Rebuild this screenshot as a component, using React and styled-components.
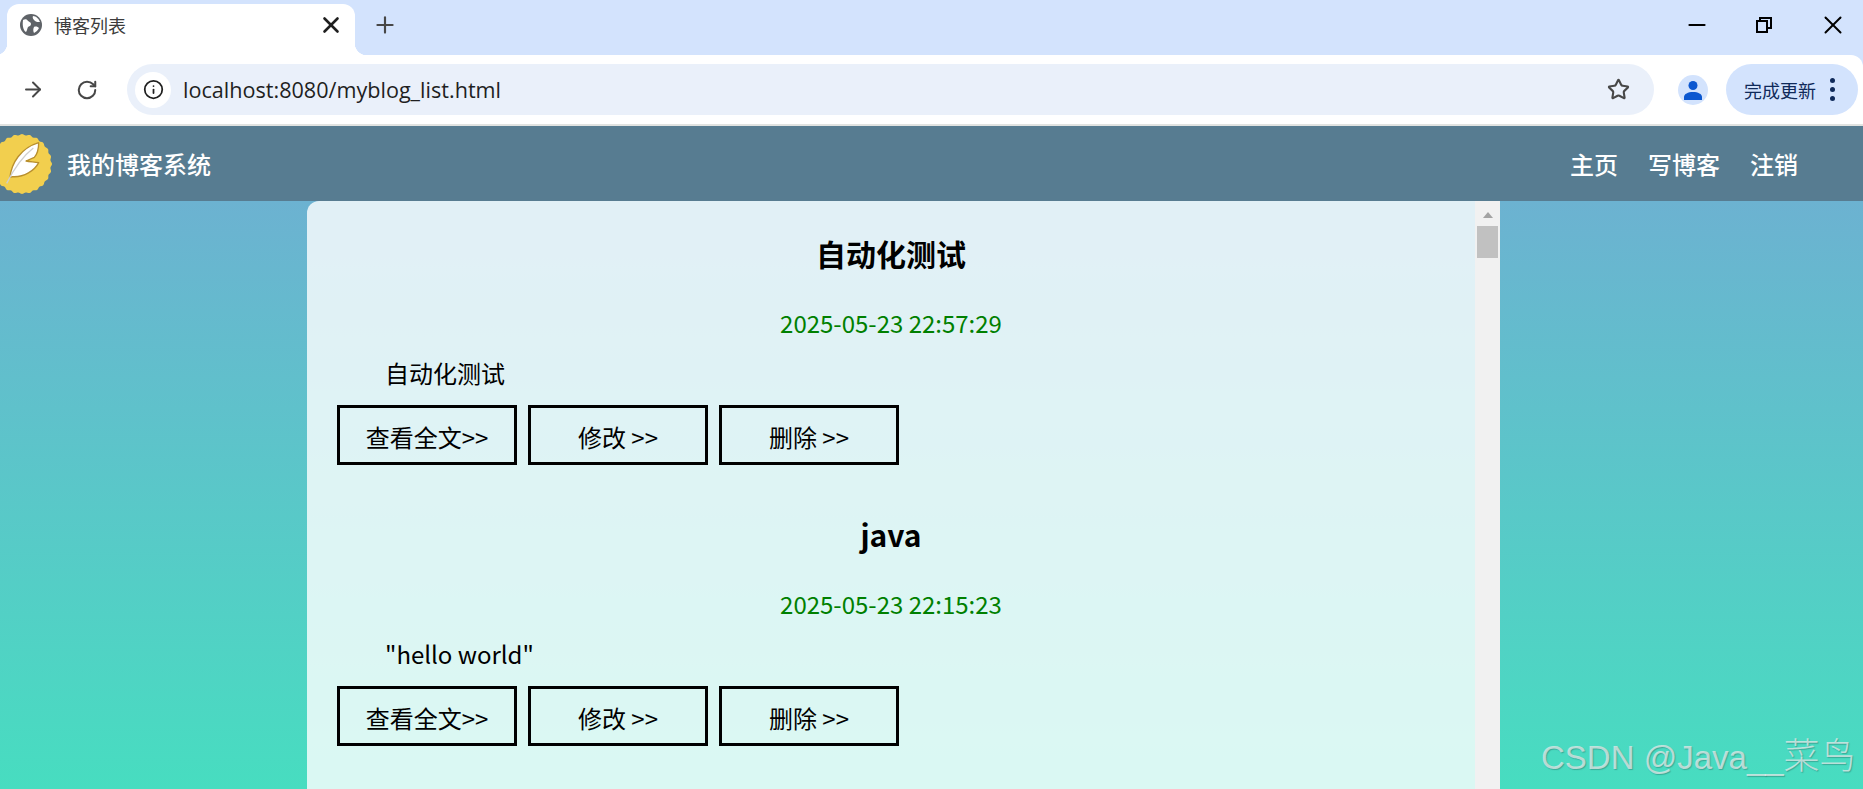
import React from 'react';
import styled, {createGlobalStyle} from "styled-components";
import {ArrowRight, Info, Minus, Plus, RotateCw, Star, X} from "lucide-react";

const cjk = `"Noto Sans CJK SC", "Noto Sans", sans-serif`

const GlobalStyle = createGlobalStyle`
  html, body {
    margin: 0;
    padding: 0;
    height: 100%;
    overflow: hidden;
    font-family: ${cjk};
  }
`

const Shell = styled.div`
  width: 100%;
  height: 789px;
  display: flex;
  flex-direction: column;
  overflow: hidden;
  position: relative;
`

const TabStrip = styled.div`
  flex: 0 0 55px;
  box-sizing: border-box;
  padding: 4px 0 0 7px;
  background: #d3e3fd;
  display: flex;
  align-items: stretch;
`
const Tab = styled.div`
  width: 348px;
  box-sizing: border-box;
  padding: 0 11px 9px 13px;
  background: #fff;
  border-radius: 12px 12px 0 0;
  display: flex;
  align-items: center;
  gap: 12px;
  position: relative;
  font-size: 18px;
  color: #3c3c3c;

  &::before, &::after {
    content: "";
    position: absolute;
    bottom: 0;
    width: 12px;
    height: 12px;
  }
  &::before {
    left: -12px;
    background: radial-gradient(circle at 0 0, transparent 12px, #fff 12.5px);
  }
  &::after {
    right: -12px;
    background: radial-gradient(circle at 100% 0, transparent 12px, #fff 12.5px);
  }
`
const TabTitle = styled.span`
  flex: 1;
`
const NewTab = styled.div`
  margin-left: 17px;
  padding-bottom: 9px;
  display: flex;
  align-items: center;
  color: #474747;
`
const WindowControls = styled.div`
  margin-left: auto;
  display: flex;
  align-items: center;
  align-self: flex-start;
  height: 42px;
  padding-right: 15px;
  gap: 46px;
  color: #000;
`

const ToolbarWrap = styled.div`
  flex: 0 0 69px;
  background: #d3e3fd;
`
const Toolbar = styled.div`
  height: 69px;
  box-sizing: border-box;
  padding: 9px 5px 9px 21px;
  background: #fff;
  border-top-right-radius: 12px;
  display: flex;
  align-items: center;
  color: #474747;
`
const ToolIcon = styled.div`
  width: 24px;
  display: flex;
  justify-content: center;
  margin-right: 30px;
`
const AddressBar = styled.div`
  flex: 0 0 1527px;
  height: 51px;
  margin-left: -2px;
  box-sizing: border-box;
  padding: 0 24px 0 8px;
  background: #eaf0fa;
  border-radius: 26px;
  display: flex;
  align-items: center;
`
const InfoBadge = styled.div`
  width: 36px;
  height: 36px;
  border-radius: 50%;
  background: #fff;
  color: #1f1f1f;
  display: flex;
  align-items: center;
  justify-content: center;
  margin-right: 12px;
`
const Url = styled.span`
  flex: 1;
  font-family: "Open Sans", sans-serif;
  font-size: 21.6px;
  color: #1f1f1f;
`
const Avatar = styled.div`
  width: 30px;
  height: 30px;
  margin-left: 24px;
  border-radius: 50%;
  background: #d3e3fd;
  display: flex;
  align-items: center;
  justify-content: center;
`
const UpdateButton = styled.div`
  width: 132px;
  height: 51px;
  margin-left: 18px;
  box-sizing: border-box;
  padding-left: 18px;
  border-radius: 26px;
  background: #d3e3fd;
  color: #0f2a5a;
  font-size: 18px;
  display: flex;
  align-items: center;
  gap: 14px;
`
const Dots = styled.div`
  display: flex;
  flex-direction: column;
  gap: 4px;

  i {
    display: block;
    width: 5px;
    height: 5px;
    border-radius: 50%;
    background: #0f2a5a;
  }
`
const ChromeLine = styled.div`
  flex: 0 0 2px;
  background: #e1e3e1;
`

const NavBar = styled.nav`
  flex: 0 0 75px;
  box-sizing: border-box;
  padding-right: 65px;
  background: #577c91;
  display: flex;
  align-items: center;
  color: #fff;
  font-size: 24px;
  font-weight: 500;
`
const Logo = styled.svg`
  width: 60px;
  height: 60px;
  margin-left: -7px;
  margin-right: 14px;
  flex: none;
`
const NavLinks = styled.div`
  margin-left: auto;
  display: flex;
  gap: 30px;
`

const Main = styled.main`
  flex: 1;
  min-height: 0;
  padding-left: 307px;
  background: linear-gradient(to bottom, #6cb2d1, #47ddc0);
  display: flex;
`
const Card = styled.section`
  width: 1193px;
  background: rgba(255, 255, 255, 0.8);
  border-radius: 12px 0 0 0;
  display: flex;
  overflow: hidden;
`
const Content = styled.div`
  flex: 1;
  box-sizing: border-box;
  padding: 28px 0 0 30px;
`
const Track = styled.div`
  flex: 0 0 25px;
  box-sizing: border-box;
  padding: 11px 2px 0;
  background: #f1f1f1;
  display: flex;
  flex-direction: column;
  align-items: center;

  &::before {
    content: "";
    border: 5.5px solid transparent;
    border-top: 0;
    border-bottom: 6px solid #a3a3a3;
  }
`
const Thumb = styled.div`
  width: 21px;
  height: 32px;
  margin-top: 8px;
  background: #c1c1c1;
`

const Blog = styled.article`
  margin-bottom: 45px;
  color: #000;
`
const BlogTitle = styled.h2`
  margin: 0 0 0 -30px;
  font-size: 30px;
  line-height: 48px;
  font-weight: 700;
  text-align: center;
`
const BlogDate = styled.div`
  margin: 28px 0 0 -30px;
  font-size: 24px;
  line-height: 36px;
  color: #008000;
  text-align: center;
`
const BlogDesc = styled.p`
  margin: 14px 0 0;
  font-size: 24px;
  line-height: 36px;
  text-indent: 48px;
`
const Actions = styled.div`
  margin-top: 14px;
  display: flex;
  gap: 11px;
`
const ActionLink = styled.a`
  width: 180px;
  height: 60px;
  box-sizing: border-box;
  border: 3px solid #000;
  padding-top: 3px;
  font-size: 24px;
  display: flex;
  align-items: center;
  justify-content: center;
  color: #000;
  text-decoration: none;
`

const Watermark = styled.div`
  position: absolute;
  left: 1541px;
  top: 733px;
  font-family: "Liberation Sans", "Noto Sans CJK SC", sans-serif;
  font-size: 33px;
  line-height: 48px;
  white-space: nowrap;
  color: rgba(235, 235, 235, 0.72);
  text-shadow: 1px 1px 1px rgba(40, 110, 100, 0.45);

  span {
    font-size: 36px;
    font-weight: 300;
  }
`

// scalloped edge of the logo badge
const badgePath = () => {
    const cx = 66, cy = 132, points = []
    for (let i = 0; i < 240; i++) {
        const a = (i / 240) * Math.PI * 2
        const r = 88 + 2 * Math.cos(a * 24)
        points.push(`${(cx + r * Math.cos(a)).toFixed(1)} ${(cy + r * Math.sin(a)).toFixed(1)}`)
    }
    return `M${points.join("L")}Z`
}

const blogs = [
    {title: "自动化测试", date: "2025-05-23 22:57:29", desc: "自动化测试"},
    {title: "java", date: "2025-05-23 22:15:23", desc: "\"hello world\""},
]

const App = () => {
    return (
        <Shell>
            <GlobalStyle/>
            <TabStrip>
                <Tab>
                    <svg width="22" height="22" viewBox="0 0 22 22">
                        <circle cx="11" cy="11" r="11" fill="#5f6368"/>
                        <path d="M3 6c2-1 4-1 5 1 1 1 3 1 3 3s-2 2-3 3c-1 2-1 4-2 5-2-1-4-5-3-12zM13 2c3 0 6 3 7 6-2 0-4 0-5-1s-3-3-2-5zM14 13c2-1 4 0 5 1-1 2-3 4-5 5-1-2-1-4 0-6z" fill="#fff"/>
                    </svg>
                    <TabTitle>博客列表</TabTitle>
                    <X size={26} strokeWidth={2.4} color="#1f1f1f"/>
                </Tab>
                <NewTab><Plus size={26} strokeWidth={2}/></NewTab>
                <WindowControls>
                    <Minus size={26} strokeWidth={1.9}/>
                    <svg width="16" height="16" viewBox="0 0 16 16" fill="none" stroke="#000" strokeWidth="2">
                        <rect x="1" y="4" width="10" height="11"/>
                        <path d="M4 4V1h11v10h-4"/>
                    </svg>
                    <X size={30} strokeWidth={1.6}/>
                </WindowControls>
            </TabStrip>
            <ToolbarWrap>
                <Toolbar>
                    <ToolIcon><ArrowRight size={25} strokeWidth={2}/></ToolIcon>
                    <ToolIcon><RotateCw size={22} strokeWidth={2.2}/></ToolIcon>
                    <AddressBar>
                        <InfoBadge><Info size={21} strokeWidth={2}/></InfoBadge>
                        <Url>localhost:8080/myblog_list.html</Url>
                        <Star size={23} strokeWidth={2.2} color="#474747"/>
                    </AddressBar>
                    <Avatar>
                        <svg width="20" height="20" viewBox="0 0 20 20" fill="#0b57d0">
                            <circle cx="10" cy="5.5" r="4.5"/>
                            <path d="M1 20v-3c0-3 4-5 9-5s9 2 9 5v3z"/>
                        </svg>
                    </Avatar>
                    <UpdateButton>
                        完成更新
                        <Dots><i/><i/><i/></Dots>
                    </UpdateButton>
                </Toolbar>
            </ToolbarWrap>
            <ChromeLine/>
            <NavBar>
                <Logo viewBox="-21 42 180 180">
                    <path d={badgePath()} fill="#f2cf4e"/>
                    <path d="M30 172C34 130 62 84 116 68C116 88 110 104 103 112L78 123C90 125 104 126 116 128C104 152 72 172 38 170Z" fill="#fff" stroke="#b98f2d" strokeWidth="4" strokeLinejoin="round"/>
                    <path d="M20 190C40 150 64 112 100 84" fill="none" stroke="#cfcfcf" strokeWidth="4"/>
                </Logo>
                我的博客系统
                <NavLinks>
                    <span>主页</span>
                    <span>写博客</span>
                    <span>注销</span>
                </NavLinks>
            </NavBar>
            <Main>
                <Card>
                    <Content>
                        {blogs.map(blog => (
                            <Blog key={blog.date}>
                                <BlogTitle>{blog.title}</BlogTitle>
                                <BlogDate>{blog.date}</BlogDate>
                                <BlogDesc>{blog.desc}</BlogDesc>
                                <Actions>
                                    <ActionLink>查看全文&gt;&gt;</ActionLink>
                                    <ActionLink>修改 &gt;&gt;</ActionLink>
                                    <ActionLink>删除 &gt;&gt;</ActionLink>
                                </Actions>
                            </Blog>
                        ))}
                    </Content>
                    <Track><Thumb/></Track>
                </Card>
            </Main>
            <Watermark>CSDN @Java__<span>菜鸟</span></Watermark>
        </Shell>
    );
};

export default App;
